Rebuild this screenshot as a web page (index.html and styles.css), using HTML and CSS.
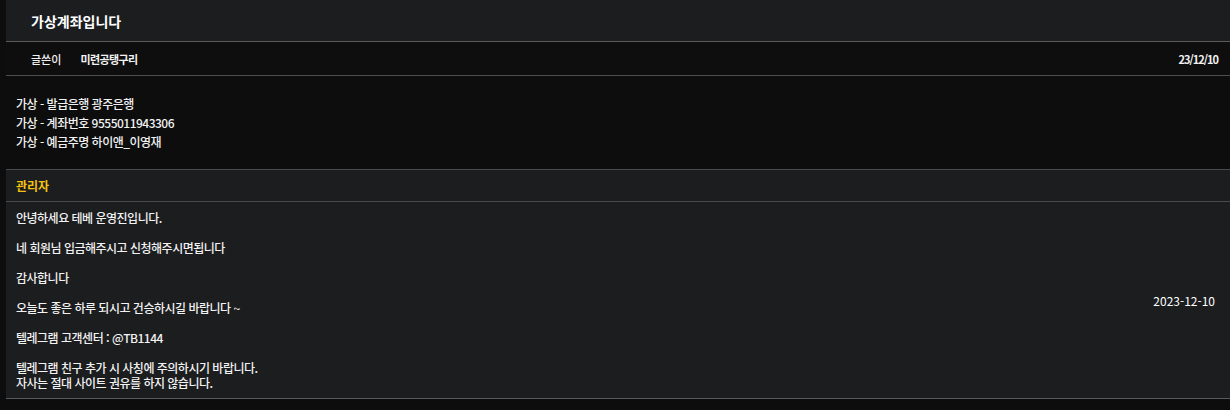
FILE: index.html
```html
<!DOCTYPE html>
<html lang="ko">
<head>
    <meta charset="UTF-8">
    <meta name="viewport" content="width=device-width, initial-scale=1.0">
    <title>가상계좌입니다</title>
    <link rel="stylesheet" href="styles.css">
</head>
<body>
<div class="board">
    <div class="post-title">가상계좌입니다</div>
    <div class="post-meta">
        <div class="writer">
            <span class="label">글쓴이</span>
            <span class="name">미련공탱구리</span>
        </div>
        <span class="date">23/12/10</span>
    </div>
    <div class="post-body">
        가상 - 발급은행 광주은행<br>
        가상 - 계좌번호 9555011943306<br>
        가상 - 예금주명 하이앤_이영재
    </div>
    <div class="reply">
        <div class="reply-head">관리자</div>
        <div class="reply-row">
            <div class="reply-text">
                안녕하세요 테베 운영진입니다.<br><br>
                네 회원님 입금해주시고 신청해주시면됩니다<br><br>
                감사합니다<br><br>
                오늘도 좋은 하루 되시고 건승하시길 바랍니다 ~<br><br>
                텔레그램 고객센터 : @TB1144<br><br>
                텔레그램 친구 추가 시 사칭에 주의하시기 바랍니다.<br>
                자사는 절대 사이트 권유를 하지 않습니다.
            </div>
            <div class="reply-date">2023-12-10</div>
        </div>
    </div>
</div>
</body>
</html>
```

FILE: styles.css
```css
body {
    margin: 0;
    background-color: #0d0d0d;
    color: #f2f2f2;
    font-family: "Noto Sans CJK KR", "Noto Sans", sans-serif;
    font-size: 12px;
    font-weight: 500;
}
.board {
    margin-left: 6px;
}
.post-title {
    background-color: #1c1d1f;
    height: 41px;
    line-height: 42px;
    padding-left: 25px;
    font-size: 14px;
    font-weight: bold;
    color: #fff;
    border-bottom: 1px solid #5a5a5a;
}
.post-meta {
    display: flex;
    justify-content: space-between;
    align-items: center;
    height: 33px;
    padding: 0 12px 0 25px;
    background-color: #0e0e0e;
    border-bottom: 1px solid #4e4e4e;
    font-size: 11px;
}
.writer .name {
    margin-left: 16px;
    font-weight: bold;
    letter-spacing: -0.6px;
}
.date {
    font-weight: bold;
    letter-spacing: -1px;
}
.post-body {
    margin-left: -6px;
    padding: 18px 10px 18px 16px;
    line-height: 19px;
    letter-spacing: -0.5px;
}
.reply {
    background-color: #1c1d1f;
    border-top: 1px solid #4a4a4a;
    border-bottom: 1px solid #5a5a5a;
}
.reply-head {
    height: 31px;
    line-height: 31px;
    padding-left: 10px;
    color: #f5c211;
    font-weight: bold;
    border-bottom: 1px solid #4a4a4a;
}
.reply-row {
    display: flex;
    justify-content: space-between;
    align-items: center;
    padding: 8px 15px 8px 10px;
}
.reply-text {
    line-height: 15px;
    letter-spacing: -0.5px;
}
.reply-date {
    color: #fff;
    font-weight: 400;
}
```
